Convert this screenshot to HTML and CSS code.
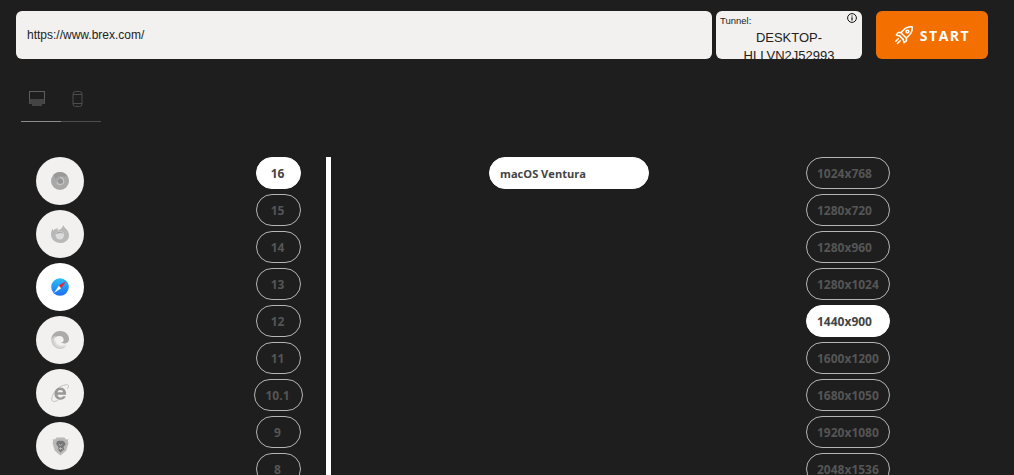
FILE: index.html
```html
<!DOCTYPE html>
<html>
	<head>
		<title>Start test</title>
		<link rel="stylesheet" href="styles.css">
	</head>
	<body>
		<div class="top">
			<div class="url">https://www.brex.com/</div>
			<div class="tunnel">
				<span class="tunnel-label">Tunnel:</span>
				<svg class="info" viewBox="0 0 10 10" width="10" height="10">
					<circle cx="5" cy="5" r="4.400" fill="none" stroke="#111" stroke-width="1"/>
					<path d="M5 2.400v1M5 4.200v3.400" stroke="#111" stroke-width="1.200" fill="none"/>
				</svg>
				<div class="tunnel-name">DESKTOP-HLLVN2J52993</div>
			</div>
			<button class="start">
				<svg viewBox="0 0 22 22" width="20" height="20" fill="none" stroke="#fff" stroke-width="1.700" stroke-linejoin="round" stroke-linecap="round">
					<path d="M20 2c-4-.3-7.300 1-9.800 3.800L7.700 8.600 13.400 14.300l2.800-2.500C19 9.300 20.300 6 20 2z"/>
					<path d="M8 8.300H4.600L2.600 11l3.600 1M13.700 14v3.400L11 19.400l-1-3.600"/>
					<path d="M6.200 12l3.800 3.800"/>
					<circle cx="14.800" cy="7.200" r="1.500"/>
					<path d="M4.700 15.200l-2.700 2.700M6.800 17.300 3.800 20.300"/>
				</svg>
				START
			</button>
		</div>

		<div class="tabs">
			<div class="tab active">
				<svg viewBox="0 0 17 16" width="17" height="16">
					<rect x="0.500" y="0.500" width="15" height="12" fill="none" stroke="#5e5e5e" stroke-width="1"/>
					<rect x="0.500" y="8" width="15" height="5" fill="#444"/>
					<rect x="3" y="13" width="10" height="2" fill="#444"/>
				</svg>
			</div>
			<div class="tab">
				<svg viewBox="0 0 11 16" width="11" height="16" fill="none" stroke="#4d4d4d" stroke-width="1">
					<rect x="1" y="0.500" width="9" height="15" rx="2.500"/>
					<path d="M1 3.500h9M1 12.500h9"/>
				</svg>
			</div>
		</div>

		<div class="main">
			<div class="browsers">
				<div class="browser">
					<svg viewBox="0 0 18 18" width="18" height="18">
						<circle cx="9" cy="9" r="9" fill="#a8a8a8"/>
						<path d="M9 0a9 9 0 0 1 7.800 4.500H9A4.500 4.500 0 0 0 4.800 7.400L2.200 3.100A9 9 0 0 1 9 0z" fill="#999"/>
						<path d="M9 4.800a4.200 4.200 0 1 1-3.800 6l1.500-.6A2.700 2.700 0 1 0 9 6.300z" fill="#c6c6c6"/>
						<circle cx="9.500" cy="9.300" r="2.500" fill="#949494"/>
					</svg>
				</div>
				<div class="browser">
					<svg viewBox="0 0 18 18" width="18" height="18">
						<path d="M12.500 0c.2 2 2 3 3 4.300C17.300 6.500 18 8.500 18 10.200 18 15 14 18 9.500 18 4 18 0 14 0 9.500 0 7 .6 5 1.800 3.700l.7 2C3.400 4.300 4.500 3.800 6 3.600L7 2.800 6.500 5.500C9 5 11.500 3 12.500 0z" fill="#b8b8b8"/>
						<circle cx="8.800" cy="10.200" r="4.200" fill="#dcdcdc"/>
						<path d="M4.800 9c.5-2.500 5-4 7.500-.5L9 8z" fill="#a8a8a8"/>
					</svg>
				</div>
				<div class="browser selected">
					<svg viewBox="0 0 18 18" width="18" height="18">
						<defs>
							<linearGradient id="safari" x1="0" y1="0" x2="0" y2="1">
								<stop offset="0" stop-color="#2bc0f5"/>
								<stop offset="1" stop-color="#1e6ff0"/>
							</linearGradient>
						</defs>
						<circle cx="9" cy="9" r="8.800" fill="url(#safari)"/>
						<path d="M15 3 10.200 10.200 7.800 7.800z" fill="#f0202a"/>
						<path d="M3 15 7.800 7.800 10.200 10.200z" fill="#fff"/>
					</svg>
				</div>
				<div class="browser">
					<svg viewBox="0 0 18 18" width="18" height="18">
						<path d="M.2 8C.9 3.400 4.500 0 9 0c5 0 9 3.500 9 8 0 3-2.400 4.500-4.700 4.500-1.400 0-2.600-.5-3.100-1.200 1.500-.1 2.500-1 2.500-2.400 0-2.200-1.900-3.900-4.200-3.900C5.500 5 3 6.500 1.800 9.500z" fill="#ababab"/>
						<path d="M.2 8c1-2 3-3.300 5-3.300-1.500 1.200-2.200 3-2 5 .5 4.500 5.200 7.300 10 5.800 1-.3 1.800-.7 2.400-1.200C14 16.800 11.700 18 9 18c-5 0-9.300-4.500-8.800-10z" fill="#cdcdcd"/>
						<path d="M4.500 9c0 4.500 4.500 6.500 8.500 5.300 1-.3 2-.8 2.900-1.500-.7 1-1.500 1.800-2.500 2.500-3 2-8 1.400-9.600-2.300-.5-1.200-.4-2.700.7-4z" fill="#dcdcdc"/>
					</svg>
				</div>
				<div class="browser">
					<svg viewBox="0 0 18 18" width="18" height="18">
						<path d="M1 17C-.4 14 3 7 8 3.500 12 .8 17 0 17.500 1.500c.3 1-.5 2.300-1.500 3.500" fill="none" stroke="#c0c0c0" stroke-width="1"/>
						<path d="M1.500 17.200C3 18 5.500 17 7 16" fill="none" stroke="#c0c0c0" stroke-width="1"/>
						<path d="M9.500 3.500c-3.600 0-6 2.800-6 6.300s2.300 6 6 6c2.500 0 4.500-1.200 5.300-3.500h-3c-.5 1-1.300 1.300-2.300 1.300-1.500 0-2.800-1-2.900-2.800h8.500C15.500 6.500 13 3.500 9.500 3.500zM6.600 8.300C6.800 6.900 8 6 9.400 6s2.500.9 2.700 2.300z" fill="#999"/>
					</svg>
				</div>
				<div class="browser">
					<svg viewBox="0 0 18 19" width="17" height="19">
						<path d="M5 0h8l2 2 2.500-.2-.8 2.300.8 1.600L15 14l-6 5-6-5L.5 5.700l.8-1.600L.5 1.800 3 2z" fill="#b8b8b8"/>
						<path d="M5 4.500l2-1h4l2 1 1.500 2.500-2.500 3 1 2.500L9 15.500 6 12.500l1-2.500-2.500-3z" fill="#767676"/>
						<path d="M7 7 9 8.500 11 7M9 10.500v2.500M6.500 12.500 9 11l2.500 1.500" stroke="#bcbcbc" stroke-width="1" fill="none"/>
					</svg>
				</div>
			</div>

			<div class="versions">
				<div class="pill selected">16</div>
				<div class="pill">15</div>
				<div class="pill">14</div>
				<div class="pill">13</div>
				<div class="pill">12</div>
				<div class="pill">11</div>
				<div class="pill wide">10.1</div>
				<div class="pill">9</div>
				<div class="pill">8</div>
			</div>

			<div class="divider"></div>

			<div class="systems">
				<div class="pill os selected">macOS Ventura</div>
			</div>

			<div class="resolutions">
				<div class="pill">1024x768</div>
				<div class="pill">1280x720</div>
				<div class="pill">1280x960</div>
				<div class="pill">1280x1024</div>
				<div class="pill selected">1440x900</div>
				<div class="pill">1600x1200</div>
				<div class="pill">1680x1050</div>
				<div class="pill">1920x1080</div>
				<div class="pill">2048x1536</div>
			</div>
		</div>
	</body>
</html>
```

FILE: styles.css
```css
html, body {
	height: 100%;
}

body {
	margin: 0;
	overflow: hidden;
	background-color: #1e1e1e;
	font-family: "Open Sans", sans-serif;
}

.top {
	display: flex;
	padding: 11px 26px 0 16px;
	height: 48px;
}

.url {
	width: 685px;
	padding-left: 11px;
	line-height: 48px;
	background: #f2f1ef;
	border-radius: 6px;
	font-family: "Liberation Sans", sans-serif;
	font-size: 12px;
	color: #222;
}

.tunnel {
	position: relative;
	width: 146px;
	margin-left: 4px;
	overflow: hidden;
	background: #f2f1ef;
	border-radius: 6px;
	font-family: "Liberation Sans", sans-serif;
	color: #222;
}

.tunnel-label {
	display: block;
	padding: 4px 0 0 4px;
	font-size: 9.500px;
	line-height: 11px;
}

.info {
	position: absolute;
	top: 2px;
	right: 5px;
}

.tunnel-name {
	margin-top: 3px;
	padding: 0 10px;
	font-size: 13px;
	line-height: 18px;
	text-align: center;
}

.start {
	display: flex;
	align-items: center;
	justify-content: center;
	gap: 6px;
	width: 112px;
	margin-left: 14px;
	padding: 0;
	border: none;
	border-radius: 6px;
	background: #f26f00;
	color: #fff;
	font-family: "Open Sans", sans-serif;
	font-size: 14px;
	font-weight: 700;
	letter-spacing: 1.500px;
}

.tabs {
	display: flex;
	width: 80px;
	margin: 25px 0 0 21px;
}

.tab {
	box-sizing: border-box;
	width: 40px;
	height: 38px;
	padding-top: 6px;
	border-bottom: 1px solid #4d4d4d;
}

.tab.active {
	padding-left: 8px;
	border-bottom-color: #8a8a8a;
}

.tab + .tab {
	padding-left: 11px;
}

.main {
	display: flex;
	align-items: flex-start;
	margin-top: 35px;
}

.browsers {
	display: flex;
	flex-direction: column;
	gap: 5px;
	width: 48px;
	margin-left: 36px;
}

.browser {
	display: flex;
	align-items: center;
	justify-content: center;
	width: 48px;
	height: 48px;
	flex-shrink: 0;
	border-radius: 50%;
	background: #f2f1ef;
}

.browser.selected {
	background: #fff;
}

.versions, .resolutions {
	display: flex;
	flex-direction: column;
	align-items: center;
	gap: 5px;
}

.versions {
	width: 49px;
	margin-left: 170px;
}

.versions .pill {
	width: 45px;
	padding-right: 2px;
}

.versions .pill.wide {
	width: 49px;
}

.divider {
	width: 5px;
	height: 400px;
	margin-left: 23px;
	background: #fff;
}

.systems {
	width: 160px;
	margin-left: 158px;
}

.resolutions {
	width: 84px;
	margin-left: 157px;
}

.resolutions .pill {
	width: 84px;
	padding-left: 10px;
	text-align: left;
}

.pill {
	box-sizing: border-box;
	flex-shrink: 0;
	height: 32px;
	border: 1px solid #b5b5b5;
	border-radius: 16px;
	font-size: 12px;
	font-weight: 700;
	line-height: 32px;
	text-align: center;
	color: #555;
}

.pill.selected {
	background: #fff;
	border-color: #fff;
	color: #444;
}

.pill.os {
	padding-left: 10px;
	font-size: 11.100px;
	text-align: left;
}
```
